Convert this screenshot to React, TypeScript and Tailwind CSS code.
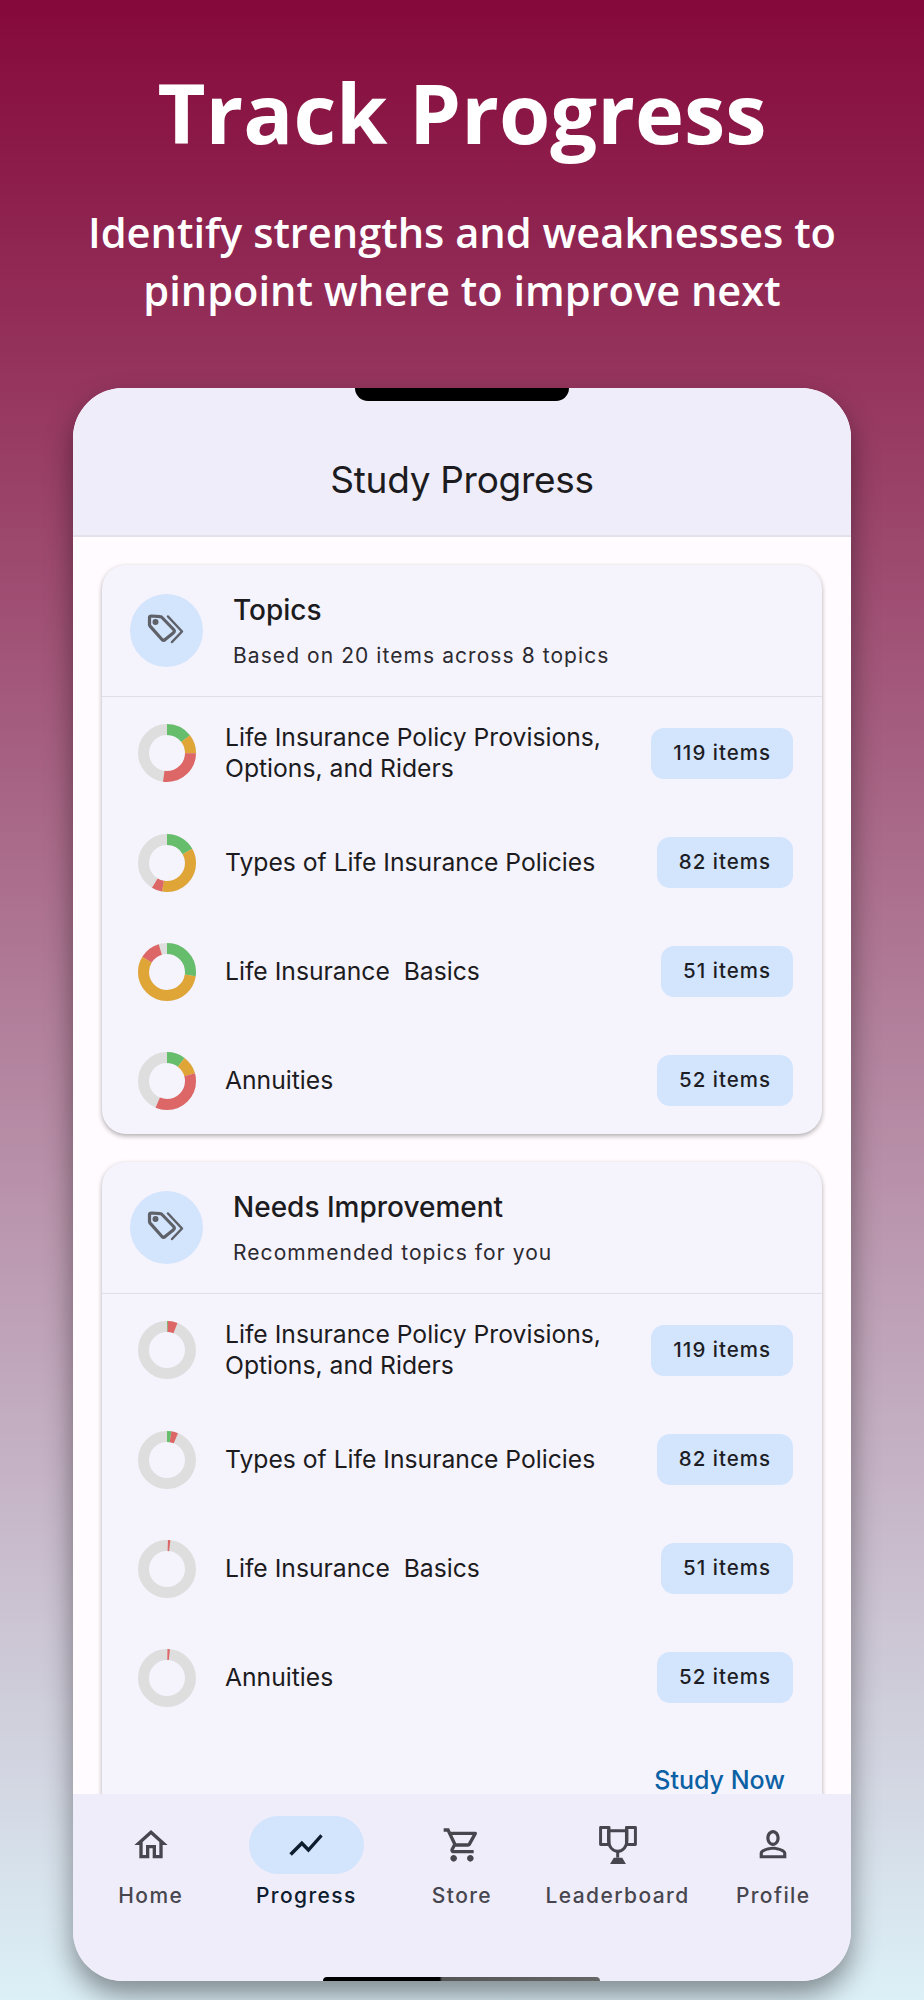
type Seg = { color: string; from: number; to: number }

const GREEN = '#66bd6c'
const AMBER = '#e0a537'
const RED = '#dd6666'

const topics = [
  {
    label: ['Life Insurance Policy Provisions,', 'Options, and Riders'],
    items: '119 items',
    segs: [
      { color: GREEN, from: 0, to: 52 },
      { color: AMBER, from: 52, to: 90 },
      { color: RED, from: 90, to: 187 },
    ],
  },
  {
    label: ['Types of Life Insurance Policies'],
    items: '82 items',
    segs: [
      { color: GREEN, from: 0, to: 60 },
      { color: AMBER, from: 60, to: 189 },
      { color: RED, from: 189, to: 210 },
    ],
  },
  {
    label: ['Life Insurance\u00a0 Basics'],
    items: '51 items',
    segs: [
      { color: GREEN, from: 0, to: 98 },
      { color: AMBER, from: 98, to: 300 },
      { color: RED, from: 300, to: 341 },
    ],
  },
  {
    label: ['Annuities'],
    items: '52 items',
    segs: [
      { color: GREEN, from: 0, to: 37 },
      { color: AMBER, from: 37, to: 74 },
      { color: RED, from: 74, to: 202 },
    ],
  },
]

const improve = [
  { ...topics[0], segs: [{ color: GREEN, from: 0, to: 2 }, { color: RED, from: 2, to: 21 }] },
  { ...topics[1], segs: [{ color: GREEN, from: 0, to: 9 }, { color: RED, from: 9, to: 22 }] },
  { ...topics[2], segs: [{ color: RED, from: 2, to: 7 }] },
  { ...topics[3], segs: [{ color: RED, from: 1, to: 6 }] },
]

function Donut({ segs }: { segs: Seg[] }) {
  const r = 23.5
  const c = 2 * Math.PI * r
  return (
    <svg width="58" height="58" viewBox="0 0 58 58" className="shrink-0 -rotate-90">
      <circle cx="29" cy="29" r={r} fill="none" stroke="#dedede" strokeWidth="11" />
      {segs.map((s) => (
        <circle
          key={s.color}
          cx="29"
          cy="29"
          r={r}
          fill="none"
          stroke={s.color}
          strokeWidth="11"
          strokeDasharray={`${((s.to - s.from) / 360) * c} ${c}`}
          strokeDashoffset={(-s.from / 360) * c}
        />
      ))}
    </svg>
  )
}

function TagsIcon() {
  return (
    <svg width="40" height="40" viewBox="0 0 40 40" fill="none" stroke="#5f6169" strokeWidth="3.2" strokeLinejoin="round" strokeLinecap="round">
      <path d="M2.500 6.500 2.500 13.500c0 .8.300 1.300.800 1.900L15 28.500c1 1 2.200 1 3.200 0l8.300-6.800c1-1 1-2.200.100-3.200L15 6.500c-.600-.600-1.200-.8-2-.8L4.500 5c-1.200 0-2 .4-2 1.500Z" />
      <circle cx="8.500" cy="11" r="1.400" fill="#5f6169" />
      <path d="M21 5.500 35 20.500 25 31" strokeWidth="2.500" />
    </svg>
  )
}

function Row({ label, items, segs, first }: { label: string[]; items: string; segs: Seg[]; first?: boolean }) {
  return (
    <div className={`flex items-center pl-[36px] pr-[29px] pt-[2px] ${first ? 'h-[110px]' : 'h-[109px]'}`}>
      <Donut segs={segs} />
      <div className="ml-[29px] flex-1 text-[24.700px] leading-[31px] text-[#1c1b20]">
        {label.map((l) => (
          <div key={l}>{l}</div>
        ))}
      </div>
      <div className="flex h-[51px] items-center rounded-[13px] bg-[#d3e4fd] px-[22px] text-[20.500px] font-medium tracking-[1px] text-[#1d1d26]">
        {items}
      </div>
    </div>
  )
}

function Card({ title, sub, rows, children }: { title: string; sub: string; rows: typeof topics; children?: React.ReactNode }) {
  return (
    <section className="rounded-[24px] bg-[#f5f3fc] shadow-[0_2px_5px_rgba(0,0,0,0.32)]">
      <header className="flex h-[132px] items-center border-b border-[#dfdde8] pl-[28px]">
        <div className="flex h-[73px] w-[73px] items-center justify-center rounded-full bg-[#d3e4fd]">
          <TagsIcon />
        </div>
        <div className="ml-[30px]">
          <div className="text-[28px] font-medium leading-[36px] text-[#1c1b20]">{title}</div>
          <div className="mt-[14px] text-[21px] leading-[28px] tracking-[1.07px] text-[#2b2a30]">{sub}</div>
        </div>
      </header>
      {rows.map((r, i) => (
        <Row key={r.items} {...r} first={i === 0} />
      ))}
      {children}
    </section>
  )
}

const NAV_FILLS: Record<string, string> = {
  home: 'M12 5.690l5 4.500V18h-2v-6H9v6H7v-7.810l5-4.500M12 3 2 12h3v8h6v-6h2v6h6v-8h3L12 3z',
  progress: 'M3.500 18.490l6-6.010 4 4L22 6.920l-1.410-1.410-7.090 7.970-4-4L2 16.990z',
  store: 'M15.550 13c.750 0 1.410-.410 1.750-1.030l3.580-6.490c.370-.660-.110-1.480-.870-1.480H5.210l-.940-2H1v2h2l3.600 7.590-1.350 2.440C4.520 15.370 5.480 17 7 17h12v-2H7l1.100-2h7.450zM6.160 6h12.150l-2.760 5H8.530L6.160 6zM7 18c-1.100 0-1.990.900-1.990 2S5.900 22 7 22s2-.900 2-2-.900-2-2-2zm10 0c-1.100 0-1.990.900-1.990 2s.890 2 1.990 2 2-.900 2-2-.900-2-2-2z',
  profile: 'M12 4.900c1.160 0 2.100 1.300 2.100 2.900s-.940 2.900-2.100 2.900-2.100-1.300-2.100-2.900.940-2.900 2.100-2.900m0 10c2.970 0 6.100 1.460 6.100 2.100v1.100H5.900V17c0-.640 3.130-2.100 6.100-2.100M12 3C9.790 3 8 5.200 8 7.800s1.790 4.800 4 4.800 4-2.200 4-4.800S14.210 3 12 3zm0 10c-2.670 0-8 1.340-8 4v3h16v-3c0-2.660-5.330-4-8-4z',
}

function NavIcon({ name, color }: { name: string; color: string }) {
  if (name === 'leaderboard') {
    return (
      <svg width="38" height="38" viewBox="0 0 36 36" fill="none" stroke={color} strokeWidth="2.800">
        <path d="M1.500 1.500h8v16h-8zM26 1.500h8.500v16H26z" strokeLinejoin="round" />
        <path d="M9 4.500h17.500v9c0 6-4 10.500-8.800 10.500S9 19.500 9 13.500z" />
        <path d="M17.700 24v6" />
        <path d="M10.500 36l3.500-6h8l3.500 6z" fill={color} stroke="none" />
      </svg>
    )
  }
  return (
    <svg width="40" height="40" viewBox="0 0 24 24" fill={color}>
      <path d={NAV_FILLS[name]} />
    </svg>
  )
}

const navItems = [
  { name: 'home', label: 'Home' },
  { name: 'progress', label: 'Progress', active: true },
  { name: 'store', label: 'Store' },
  { name: 'leaderboard', label: 'Leaderboard' },
  { name: 'profile', label: 'Profile' },
]

export default function App() {
  return (
    <div className="flex h-[2000px] w-[924px] flex-col items-center overflow-hidden bg-[linear-gradient(180deg,#85093a_0%,#dcf0f7_100%)] font-['Inter',sans-serif]">
      <div className="pt-[57px] text-center font-['Open_Sans',sans-serif] text-white">
        <h1 className="text-[83px] font-bold leading-[110px]">Track Progress</h1>
        <p className="mt-[36px] text-[41.600px] font-semibold leading-[58px]">
          Identify strengths and weaknesses to
          <br />
          pinpoint where to improve next
        </p>
      </div>

      <div className="relative mt-[69px] flex h-[1593px] w-[778px] flex-col overflow-hidden rounded-[50px] bg-[#fffbfe] shadow-[0_14px_28px_rgba(0,0,0,0.42)]">
        <div className="absolute left-[282px] top-0 h-[13px] w-[214px] rounded-b-[18px] bg-black" />
        <div className="flex h-[149px] shrink-0 items-end justify-center border-b-2 border-[#e3e2ea] bg-[#efedf9] pb-[30px] text-[37px] leading-[50px] tracking-[-0.3px] text-[#1c1b20]">
          Study Progress
        </div>

        <div className="flex min-h-0 flex-1 flex-col gap-[28px] overflow-hidden px-[29px] pt-[28px]">
          <Card title="Topics" sub="Based on 20 items across 8 topics" rows={topics} />
          <Card title="Needs Improvement" sub="Recommended topics for you" rows={improve}>
            <div className="flex justify-end pr-[37px] pt-[33px] pb-[40px] text-[25px] font-medium leading-[32px] text-[#0b61a4]">
              Study Now
            </div>
          </Card>
        </div>

        <nav className="relative grid h-[187px] shrink-0 grid-cols-5 bg-[#efedf9] pt-[22px]">
          {navItems.map((n) => (
            <div key={n.name} className="flex flex-col items-center">
              <div className={`flex h-[58px] w-[115px] items-center justify-center rounded-full ${n.active ? 'bg-[#d3e4fd]' : ''}`}>
                <NavIcon name={n.name} color={n.active ? '#0d1c2e' : '#47464f'} />
              </div>
              <div className={`mt-[8px] whitespace-nowrap text-[21px] font-medium leading-[28px] tracking-[1.4px] ${n.active ? 'text-[#0d1c2e]' : 'text-[#47464f]'}`}>
                {n.label}
              </div>
            </div>
          ))}
          <div className="absolute bottom-0 left-[250px] h-[4px] w-[277px] rounded-t-[4px] bg-[linear-gradient(90deg,#000_0%,#000_42%,#555_43%,#666_100%)]" />
        </nav>
      </div>
    </div>
  )
}
